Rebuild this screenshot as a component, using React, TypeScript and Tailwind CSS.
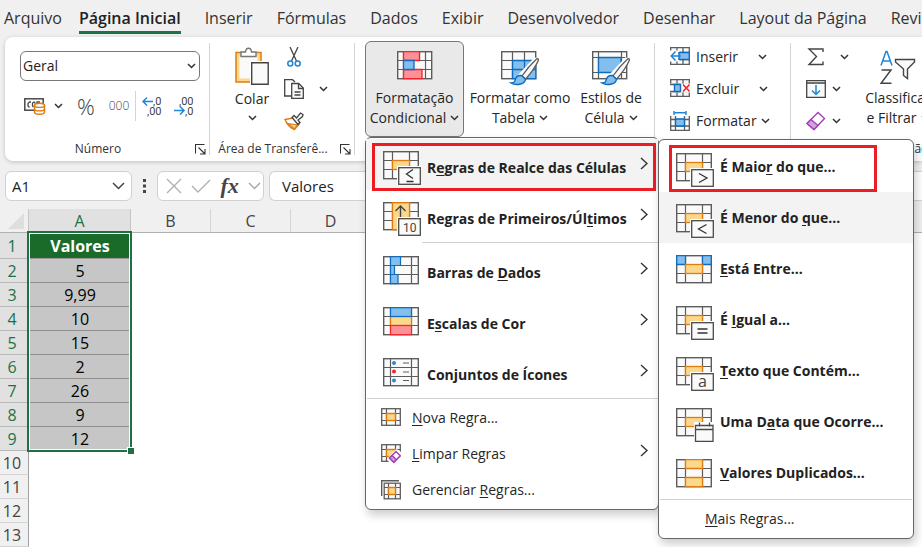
import React, { useState } from 'react';
import clsx from 'clsx';

const GRAY = '#5c5c5c';
const ORANGE = '#e07b10';
const AMBER = '#fbd88b';
const BLUE = '#0f6cbd';
const SKY = '#83beec';
const RED = '#f0262b';
const PINK = '#ff9097';

/* ---------- small glyphs ---------- */

const ChevronDown: React.FC<{ className?: string }> = ({ className }) => (
  <svg width="9" height="6" viewBox="0 0 9 6" fill="none" className={clsx('shrink-0', className)}>
    <path d="M1 1l3.5 3.5L8 1" stroke="#333" strokeWidth="1.5" />
  </svg>
);

const WideChevron: React.FC<{ color: string }> = ({ color }) => (
  <svg width="13" height="8" viewBox="0 0 13 8" fill="none" className="shrink-0">
    <path d="M1 1l5.5 5.5L12 1" stroke={color} strokeWidth="1.5" />
  </svg>
);

const ChevronRight = () => (
  <svg width="8" height="13" viewBox="0 0 8 13" fill="none" className="mb-2 shrink-0">
    <path d="M1 1l6 5.5L1 12" stroke="#333" strokeWidth="1.4" />
  </svg>
);

const Launcher = () => (
  <svg width="11" height="11" viewBox="0 0 11 11" fill="none" stroke="#333" strokeWidth="1.1">
    <path d="M.5 9.5V.5h9M3.5 3.5l6 6M10 5v5H5" />
  </svg>
);

/* ---------- menu icons, 38x34 ---------- */

interface GridIconProps {
  cols?: [number, number];
  children?: React.ReactNode;
  over?: React.ReactNode;
}

const GridIcon: React.FC<GridIconProps> = ({ cols = [9.5, 26.5], children, over }) => (
  <svg width="38" height="34" viewBox="0 0 38 34" fill="none" className="shrink-0">
    <rect x=".7" y=".7" width="34.6" height="27" fill="#fafafa" stroke={GRAY} strokeWidth="1.4" />
    <path d={`M${cols[0]} .5v27M${cols[1]} .5v27M.5 9.5h35M.5 18.5h35`} stroke={GRAY} strokeWidth="1.2" />
    {children}
    {over}
  </svg>
);

const MidCell = () => <rect x="9.5" y="9.5" width="17" height="9" fill={AMBER} stroke={ORANGE} strokeWidth="1.3" />;

const Badge: React.FC<{ children: React.ReactNode }> = ({ children }) => (
  <g>
    <path d="M14 15h24v19H14z" fill="#fff" />
    <rect x="15.7" y="16.7" width="21.6" height="16.6" fill="#fafafa" stroke="#4a4a4a" strokeWidth="1.3" />
    {children}
  </g>
);

const BadgeIcon: React.FC<{ d: string }> = ({ d }) => (
  <GridIcon over={<Badge><path d={d} stroke="#333" strokeWidth="1.3" /></Badge>}>
    <MidCell />
  </GridIcon>
);

const TopTenIcon = () => (
  <GridIcon
    over={
      <Badge>
        <text x="20" y="30" fontSize="12" fontWeight="400" fill="#444" fontFamily="Roboto, sans-serif">10</text>
      </Badge>
    }
  >
    <rect x="9.5" y=".7" width="17" height="27" fill={AMBER} stroke={ORANGE} strokeWidth="1.3" />
    <path d="M17.5 15V4M12.5 9l5-5 5 5" stroke="#444" strokeWidth="1.4" />
  </GridIcon>
);

const DataBarsIcon = () => (
  <GridIcon cols={[7.5, 28.5]}>
    <path d="M7.5.7h10v8.8h-10zM7.5 9.5h4v9h-4zM7.5 18.5h7.5v9.2h-7.5z" fill={SKY} stroke={BLUE} strokeWidth="1.2" />
  </GridIcon>
);

const ColorScalesIcon = () => (
  <GridIcon cols={[7.5, 28.5]}>
    <rect x="7.5" y="9.5" width="21" height="9" fill={AMBER} stroke={ORANGE} strokeWidth="1.2" />
    <rect x="7.5" y=".7" width="21" height="8.8" fill={SKY} stroke={BLUE} strokeWidth="1.2" />
    <rect x="7.5" y="18.5" width="21" height="9.2" fill={PINK} stroke={RED} strokeWidth="1.2" />
  </GridIcon>
);

const IconSetsIcon = () => (
  <GridIcon cols={[7.5, 28.5]}>
    <circle cx="11" cy="5" r="2" fill="#2b88d8" />
    <circle cx="11" cy="13.5" r="2" fill={RED} />
    <circle cx="11" cy="22.5" r="2" fill="#2b88d8" />
    <path d="M20 5h6M20 14h6M20 22.5h6" stroke={GRAY} strokeWidth="1.2" />
  </GridIcon>
);

const BetweenIcon = () => (
  <GridIcon>
    <path d="M.7.7h8.8v8.8H.7zM26.5.7h8.8v8.8h-8.8z" fill={SKY} stroke={BLUE} strokeWidth="1.3" />
    <MidCell />
  </GridIcon>
);

const ContainsIcon = () => (
  <GridIcon
    over={
      <Badge>
        <text x="22" y="30" fontSize="16" fontWeight="400" fill="#444" fontFamily="Open Sans, sans-serif">a</text>
      </Badge>
    }
  >
    <MidCell />
  </GridIcon>
);

const DateIcon = () => (
  <GridIcon
    over={
      <g>
        <path d="M18 14h20v20H18z" fill="#fff" />
        <path d="M19.5 17.5H37v15.8H19.5zM19.5 21.5H37M23.5 14.5v4M33.5 14.5v4" fill="#fafafa" stroke="#4a4a4a" strokeWidth="1.3" />
      </g>
    }
  >
    <MidCell />
  </GridIcon>
);

const DuplicatesIcon = () => (
  <GridIcon>
    <path d="M9.5.7h17v8.8h-17zM9.5 18.5h17v9.2h-17z" fill={AMBER} stroke={ORANGE} strokeWidth="1.3" />
  </GridIcon>
);

/* ---------- small menu icons, 20x20 ---------- */

const SmallGrid = () => (
  <>
    <rect x=".7" y=".7" width="18.6" height="16.6" fill="#fafafa" stroke={GRAY} strokeWidth="1.3" />
    <path d="M5.5 1v16M14.5 1v16M1 5.5h18M1 12.5h18" stroke={GRAY} strokeWidth="1.2" />
    <rect x="5.5" y="5.5" width="9" height="7" fill={AMBER} stroke={ORANGE} strokeWidth="1.4" />
  </>
);

const NewRuleIcon = () => (
  <svg width="20" height="20" viewBox="0 0 20 20" fill="none" className="shrink-0">
    <SmallGrid />
  </svg>
);

const ClearRulesIcon = () => (
  <svg width="20" height="20" viewBox="0 0 20 20" fill="none" className="shrink-0">
    <SmallGrid />
    <path d="M6 14.500L15.500 5 20 8v12H9z" fill="#fff" />
    <path d="M8.5 14l6.500-6.500 4.300 4.300-6.500 6.500z" fill="#fff" stroke="#a33fb5" strokeWidth="1.5" />
    <path d="M8.5 14l2.600-2.600 4.300 4.300-2.600 2.600z" fill="#d3a0dc" stroke="#a33fb5" strokeWidth="1.4" />
  </svg>
);

const ManageRulesIcon = () => (
  <svg width="20" height="20" viewBox="0 0 20 20" fill="none" className="shrink-0">
    <path d="M.7 16V.7H18" stroke={GRAY} strokeWidth="1.4" />
    <rect x="3.2" y="3.2" width="16.1" height="15.6" fill="#fafafa" stroke={GRAY} strokeWidth="1.3" />
    <path d="M7.5 3v16M14.5 3v16M3 7.5h16M3 14.5h16" stroke={GRAY} strokeWidth="1.2" />
    <rect x="7.5" y="7.5" width="7" height="7" fill={AMBER} stroke={ORANGE} strokeWidth="1.4" />
  </svg>
);

/* ---------- ribbon icons ---------- */

const CurrencyIcon = () => (
  <svg width="22" height="18" viewBox="0 0 22 18" fill="none" className="shrink-0">
    <rect x=".8" y="1.8" width="18.4" height="11.4" stroke="#4a4a4a" strokeWidth="1.5" />
    <path d="M7 5H5.5L4 6.500V9l1.500 1.500M11.500 6.500L10 5 8.500 6v3l1 1.200M13 7V5h3" stroke="#4a4a4a" strokeWidth="1.3" />
    <path d="M10.5 8.5c0-3 10-3 10 0V15c0 3-10 3-10 0z" fill="#fff" stroke={ORANGE} strokeWidth="1.5" />
    <path d="M10.500 8.500c0 2.500 10 2.500 10 0M10.500 12c0 2.500 10 2.500 10 0" stroke={ORANGE} strokeWidth="1.4" />
  </svg>
);

const decimalText = { fontSize: 11, fill: '#444', fontFamily: 'Roboto, sans-serif' };

const IncreaseDecimalIcon = () => (
  <svg width="22" height="22" viewBox="0 0 22 22" fill="none">
    <text x="11" y="10" {...decimalText}>,0</text>
    <text x="5" y="20" {...decimalText}>,00</text>
    <path d="M11 6.500H1M5 2.500l-4 4 4 4" stroke="#1f87d6" strokeWidth="1.5" />
  </svg>
);

const DecreaseDecimalIcon = () => (
  <svg width="22" height="22" viewBox="0 0 22 22" fill="none">
    <text x="5" y="10" {...decimalText}>,00</text>
    <text x="11" y="20" {...decimalText}>,0</text>
    <path d="M0 15.500h10M6 11.500l4 4-4 4" stroke="#1f87d6" strokeWidth="1.5" />
  </svg>
);

const PasteIcon = () => (
  <svg width="34" height="38" viewBox="0 0 34 38" fill="none">
    <path d="M1 5.500h25V35H1z" fill={AMBER} stroke={ORANGE} strokeWidth="1.5" />
    <path d="M4.500 9h18v22.500h-18z" fill="#fafafa" />
    <path d="M6 9.500V5h4.500c.5-5 5.500-5 6 0H21v4.500z" fill="#fff" stroke="#777" strokeWidth="1.4" />
    <path d="M15 14h19v24H15z" fill="#fff" />
    <path d="M16.700 15.700h16.500v21.500H16.700z" fill="#fafafa" stroke="#444" strokeWidth="1.4" />
  </svg>
);

const CutIcon = () => (
  <svg width="20" height="20" viewBox="0 0 20 20" fill="none">
    <path d="M6 0l6.500 14M14 0L7.500 14" stroke="#444" strokeWidth="1.3" />
    <circle cx="6.300" cy="16.500" r="2.500" stroke="#1f87d6" strokeWidth="1.5" />
    <circle cx="13.700" cy="16.500" r="2.500" stroke="#1f87d6" strokeWidth="1.5" />
  </svg>
);

const CopyIcon = () => (
  <svg width="20" height="20" viewBox="0 0 20 20" fill="none" stroke="#444" strokeWidth="1.3">
    <path d="M7 17H.7V.7h7.800L11 3" />
    <path d="M7.700 4.500h7l4.600 4.500v10.300H7.700z" fill="#fafafa" />
    <path d="M14.500 5v4.500H19M10.500 13h6M10.500 16h6" />
  </svg>
);

const PainterIcon = () => (
  <svg width="20" height="20" viewBox="0 0 20 20" fill="none">
    <path d="M1 8.500l8-1.500 6 6-4.500 5.500C6 17 3 13 1 8.500z" fill="#fff" stroke={ORANGE} strokeWidth="1.5" />
    <path d="M4 12.500l9 1.500-2.500 4z" fill={AMBER} stroke={ORANGE} strokeWidth="1.2" />
    <path d="M8 6.500l2-2 2.500 2.500 4-5 2.500 1.500-.5 2-4.500 3.500 2 2.500-2 2z" fill="#fafafa" stroke="#444" strokeWidth="1.3" />
  </svg>
);

const ConditionalIcon = () => (
  <svg width="38" height="36" viewBox="0 0 38 36" fill="none">
    <rect x="1.700" y="1.700" width="34" height="27" fill="#fafafa" stroke={GRAY} strokeWidth="1.4" />
    <path d="M7.500 1v28M23.500 1v28M29.500 1v28M1 10.500h35M1 19.500h35" stroke={GRAY} strokeWidth="1.2" />
    <path d="M18.500 11h10v8h-10z" fill="#fafafa" />
    <path d="M7.500 1.700h16v8.800h-16zM7.500 19.500H26v9.200H7.500z" fill={PINK} stroke={RED} strokeWidth="1.3" />
    <path d="M7.500 10.500H18v9H7.500z" fill={SKY} stroke={BLUE} strokeWidth="1.3" />
  </svg>
);

const Brush = () => (
  <>
    <path d="M36 9L20 26l-4 6" stroke="#fff" strokeWidth="6" />
    <path d="M37.300 10.500c.8-1.500-.8-2.300-2-1.300C30 14 25 20 21 26l3.500 3.200C30 23 34.500 17 37.300 10.500z" fill="#fafafa" stroke={GRAY} strokeWidth="1.3" />
    <path d="M20.500 25.500c-5-.5-6 2-6.500 5-.3 1.800-2 2.500-4 2.500 4 2.500 14 2 14.500-3.800z" fill={SKY} stroke={BLUE} strokeWidth="1.4" />
  </>
);

const TableFormatIcon = () => (
  <svg width="38" height="36" viewBox="0 0 38 36" fill="none">
    <rect x=".7" y="1.700" width="34" height="27" fill="#fafafa" stroke={GRAY} strokeWidth="1.4" />
    <path d="M11.500 10.500H35v18.300H11.500z" fill={SKY} />
    <path d="M11.500 1v27.500M23.500 1v9.500M.5 10.500h11M.5 19.500h11" stroke={GRAY} strokeWidth="1.2" />
    <path d="M11.500 10.500h23.300v18.200H11.500zM11.500 19.500h23M23.500 10.500v18" stroke={BLUE} strokeWidth="1.3" />
    <Brush />
  </svg>
);

const CellStylesIcon = () => (
  <svg width="38" height="36" viewBox="0 0 38 36" fill="none">
    <rect x=".7" y="1.700" width="34" height="27" fill="#fafafa" stroke={GRAY} strokeWidth="1.4" />
    <path d="M6.500 1v27.500M29.500 1v27.500M.5 7.500h34M.5 22.500h34" stroke={GRAY} strokeWidth="1.2" />
    <path d="M6.500 7.500H29v15H6.500z" fill={SKY} stroke={BLUE} strokeWidth="1.3" />
    <Brush />
  </svg>
);

const CellBase = () => (
  <path d="M.7.7h18.600v16.600H.7zM7 1v16M13 1v16M1 5.500h18M1 12.500h18" fill="#fafafa" stroke={GRAY} strokeWidth="1.3" />
);

const InsertCellsIcon = () => (
  <svg width="20" height="20" viewBox="0 0 20 20" fill="none" className="shrink-0">
    <CellBase />
    <path d="M0 3.500h10v11H0z" fill="#fff" />
    <path d="M9 5.500h10.300v7H9z" fill={SKY} stroke={BLUE} strokeWidth="1.4" />
    <path d="M11 9H1.500M5.500 4.500L1.200 9l4.300 4.500" stroke="#1f87d6" strokeWidth="1.5" />
  </svg>
);

const DeleteCellsIcon = () => (
  <svg width="20" height="20" viewBox="0 0 20 20" fill="none" className="shrink-0">
    <CellBase />
    <path d="M0 4.500h20v9H0z" fill="#fff" />
    <path d="M0 5.500h10M0 12.500h10" stroke={GRAY} strokeWidth="1.3" />
    <path d="M4.500 5.500h6v7h-6z" fill={SKY} stroke={BLUE} strokeWidth="1.4" />
    <path d="M13 5.500l6.500 7M19.500 5.500l-6.500 7" stroke={RED} strokeWidth="1.6" />
  </svg>
);

const FormatCellsIcon = () => (
  <svg width="20" height="20" viewBox="0 0 20 20" fill="none" className="shrink-0">
    <path d="M.7 5v14.300h18.600V5M5.500 5v14M14.500 5v14M1 8.500h18M1 15h18" stroke={GRAY} strokeWidth="1.3" />
    <path d="M5.500 8h9v7h-9z" fill={SKY} stroke={BLUE} strokeWidth="1.4" />
    <path d="M4 1.800h12M4 0v4M16 0v4" stroke="#1f87d6" strokeWidth="1.4" />
  </svg>
);

const SumIcon = () => (
  <svg width="20" height="20" viewBox="0 0 20 20" fill="none" className="shrink-0">
    <path d="M17 5V2H3l7.500 7.500L3 17.500h14v-3" stroke="#444" strokeWidth="1.4" />
  </svg>
);

const FillIcon = () => (
  <svg width="20" height="20" viewBox="0 0 20 20" fill="none" className="shrink-0">
    <path d="M.7 1.700h18.600v16.600H.7zM.7 4h18.600" fill="#fafafa" stroke="#444" strokeWidth="1.3" />
    <path d="M10 6v9M6 11.500l4 4 4-4" stroke="#1f87d6" strokeWidth="1.5" />
  </svg>
);

const EraserIcon = () => (
  <svg width="20" height="20" viewBox="0 0 20 20" fill="none" className="shrink-0">
    <path d="M1 12.500L12 1.500l6.500 6L8 18.500z" fill="#fff" stroke="#a33fb5" strokeWidth="1.4" />
    <path d="M1 12.500L5 8.500l7 6L8 18.500z" fill="#d3a0dc" stroke="#a33fb5" strokeWidth="1.3" />
  </svg>
);

const SortFilterIcon = () => (
  <svg width="36" height="36" viewBox="0 0 36 36" fill="none">
    <path d="M1 15.500L6 1.500h1l5 14M3 11h7" stroke="#1f87d6" strokeWidth="1.5" />
    <path d="M1.500 20H11L1 33.300h10.500" stroke="#444" strokeWidth="1.5" />
    <path d="M15.500 9.500h19V12L27.500 19v9.500l-4-3V19l-8-7z" fill="#fafafa" stroke="#444" strokeWidth="1.4" />
  </svg>
);

/* ---------- menus ---------- */

interface MenuEntry {
  label: string;
  icon?: React.ReactNode;
  sub?: boolean;
  active?: boolean;
  mark?: string;
}

const mainRules: MenuEntry[] = [
  { label: 'R&egras de Realce das Células', icon: <BadgeIcon d="M30 18.500l-6.500 4.500 6.500 4.500M23.500 30.500h7" />, sub: true, active: true, mark: 'left-1.5 right-0.5 top-1 -bottom-px' },
  { label: 'Regras de Primeiros/Úl&timos', icon: <TopTenIcon />, sub: true },
];

const visualRules: MenuEntry[] = [
  { label: 'Barras de &Dados', icon: <DataBarsIcon />, sub: true },
  { label: 'E&scalas de Cor', icon: <ColorScalesIcon />, sub: true },
  { label: 'Con&juntos de Ícones', icon: <IconSetsIcon />, sub: true },
];

const ruleActions: MenuEntry[] = [
  { label: '&Nova Regra...', icon: <NewRuleIcon /> },
  { label: '&Limpar Regras', icon: <ClearRulesIcon />, sub: true },
  { label: 'Gerenciar &Regras...', icon: <ManageRulesIcon /> },
];

const highlightRules: MenuEntry[] = [
  { label: 'É Maio&r do que...', icon: <BadgeIcon d="M23 20.500l8 4.500-8 4.500" />, mark: 'left-2.5 w-[208px] top-1 bottom-0' },
  { label: 'É Menor do &que...', icon: <BadgeIcon d="M30.500 20.500l-8 4.500 8 4.500" />, active: true },
  { label: '&Está Entre...', icon: <BetweenIcon /> },
  { label: 'É &Igual a...', icon: <BadgeIcon d="M21.500 23h10M21.500 27h10" /> },
  { label: '&Texto que Contém...', icon: <ContainsIcon /> },
  { label: 'Uma D&ata que Ocorre...', icon: <DateIcon /> },
  { label: '&Valores Duplicados...', icon: <DuplicatesIcon /> },
];

// "&" marks the access key
const AccessLabel: React.FC<{ text: string }> = ({ text }) => {
  const [before, rest] = text.split('&');
  return (
    <span className="whitespace-nowrap">
      {before}
      <span className="underline underline-offset-2">{rest[0]}</span>
      {rest.slice(1)}
    </span>
  );
};

const LargeItem: React.FC<{ entry: MenuEntry }> = ({ entry }) => (
  <button
    role="menuitem"
    className={clsx(
      'relative flex h-[51px] w-full items-center gap-1.5 pt-1.5 pl-[17px] pr-2.5 text-left text-sm font-bold text-[#222]',
      entry.active ? 'bg-[#f3f3f3]' : 'hover:bg-[#f3f3f3]'
    )}
  >
    {entry.icon}
    <span className={clsx('flex-1', !entry.sub && 'pb-1.5')}><AccessLabel text={entry.label} /></span>
    {entry.sub && <ChevronRight />}
    {entry.mark && <span className={clsx('absolute border-3 border-[#ec1c24]', entry.mark)} />}
  </button>
);

const SmallItem: React.FC<{ entry: MenuEntry }> = ({ entry }) => (
  <button role="menuitem" className="flex h-9 w-full items-center pl-[15px] pr-2.5 text-left text-sm text-[#262626] hover:bg-[#f3f3f3]">
    <span className="w-[31px] shrink-0">{entry.icon}</span>
    <span className="flex-1"><AccessLabel text={entry.label} /></span>
    {entry.sub && <ChevronRight />}
  </button>
);

const menuBox = 'absolute rounded-md border border-[#666] bg-white py-px shadow-[2px_5px_10px_rgba(0,0,0,0.2)]';

const ConditionalMenu = () => (
  <div role="menu" className={clsx(menuBox, 'left-0 top-full z-40 w-[294px]')}>
    {mainRules.map(e => <LargeItem key={e.label} entry={e} />)}
    <div className="my-px ml-14 h-px bg-[#d0d0d0]" />
    {visualRules.map(e => <LargeItem key={e.label} entry={e} />)}
    <div className="my-px ml-px h-px bg-[#d0d0d0]" />
    {ruleActions.map(e => <SmallItem key={e.label} entry={e} />)}

    <div role="menu" className={clsx(menuBox, 'left-full top-px z-50 w-[256px]')}>
      {highlightRules.map(e => <LargeItem key={e.label} entry={e} />)}
      <div className="mx-px my-px h-px bg-[#d0d0d0]" />
      <SmallItem entry={{ label: '&Mais Regras...' }} />
    </div>
  </div>
);

/* ---------- ribbon ---------- */

const tabs = ['Arquivo', 'Página Inicial', 'Inserir', 'Fórmulas', 'Dados', 'Exibir', 'Desenvolvedor', 'Desenhar', 'Layout da Página', 'Revisão'];

const Group: React.FC<{ label?: string; launcher?: boolean; className: string; children: React.ReactNode }> = ({ label, launcher, className, children }) => (
  <section className={clsx('relative flex shrink-0 flex-col pt-1', className)}>
    <div className="flex h-24 items-start">{children}</div>
    <div className="flex h-6 items-center pr-1 text-xs text-[#333]">
      <span className="mr-1 flex-1 text-center whitespace-nowrap">{label}</span>
      {launcher && <button aria-label={`Opções de ${label}`}><Launcher /></button>}
    </div>
    <span className="absolute top-1.5 right-0 h-28 w-px bg-[#d4d4d4]" />
  </section>
);

const BigButton: React.FC<{ icon: React.ReactNode; lines: [string, string]; className?: string }> = ({ icon, lines, className }) => (
  <button className={clsx('flex h-24 shrink-0 flex-col items-center rounded-md border pt-2 text-sm leading-5 text-[#262626]', className)}>
    <span className="h-[38px]">{icon}</span>
    <span className="whitespace-nowrap">{lines[0]}</span>
    <span className="flex items-center gap-1 whitespace-nowrap">{lines[1]}<ChevronDown /></span>
  </button>
);

const SmallButton: React.FC<{ icon: React.ReactNode; label: string; text?: boolean; gap?: string }> = ({ icon, label, text, gap }) => (
  <button aria-label={label} className="flex h-8 items-center text-sm text-[#262626]">
    {icon}
    {text && <span className="ml-1.5">{label}</span>}
    <ChevronDown className={gap} />
  </button>
);

const Ribbon = () => (
  <div className="ml-[5px] flex h-[124px] shrink-0 rounded-l-lg bg-white shadow-[0_1px_4px_rgba(0,0,0,0.2)]">
    <Group label="Número" launcher className="w-[205px]">
      <div className="w-full pt-2.5 pl-[15px] pr-2.5">
        <div className="relative">
          <select aria-label="Formato de Número" className="h-[30px] w-full appearance-none rounded-md border border-[#777] bg-white px-0.5 text-sm text-[#222]">
            <option>Geral</option>
          </select>
          <ChevronDown className="pointer-events-none absolute top-3 right-1" />
        </div>
        <div className="mt-2.5 flex h-[30px] items-center text-[#444]">
          <button aria-label="Formato de Contabilização" className="flex items-center gap-2 pl-1"><CurrencyIcon /><ChevronDown /></button>
          <button className="ml-3.5 text-[22px] font-light">%</button>
          <button className="ml-3.5 text-xs font-light">000</button>
          <span className="ml-1.5 h-full w-px bg-[#d4d4d4]" />
          <button aria-label="Aumentar Casas Decimais" className="ml-1.5"><IncreaseDecimalIcon /></button>
          <button aria-label="Diminuir Casas Decimais" className="ml-2.5"><DecreaseDecimalIcon /></button>
        </div>
      </div>
    </Group>

    <Group label="Área de Transferê..." launcher className="w-[145px]">
      <button className="ml-6 flex w-9 flex-col items-center pt-1.5 text-sm leading-5 text-[#262626]">
        <PasteIcon />
        <span className="mt-1">Colar</span>
        <ChevronDown className="mt-1.5" />
      </button>
      <div className="ml-3.5 flex flex-col">
        <button aria-label="Recortar" className="flex h-8 items-center"><CutIcon /></button>
        <button aria-label="Copiar" className="flex h-8 items-center gap-[15px]"><CopyIcon /><ChevronDown /></button>
        <button aria-label="Pincel de Formatação" className="flex h-8 items-center"><PainterIcon /></button>
      </div>
    </Group>

    <Group className="w-[300px] pl-2.5">
      <div className="relative shrink-0">
        <BigButton icon={<ConditionalIcon />} lines={['Formatação', 'Condicional']} className="w-[99px] border-[#777] bg-[#e9e9e9]" />
        <ConditionalMenu />
      </div>
      <BigButton icon={<TableFormatIcon />} lines={['Formatar como', 'Tabela']} className="w-[112px] border-transparent" />
      <BigButton icon={<CellStylesIcon />} lines={['Estilos de', 'Célula']} className="w-[70px] border-transparent" />
    </Group>

    <Group className="w-[136px] pl-[15px]">
      <div className="flex flex-col">
        <SmallButton icon={<InsertCellsIcon />} label="Inserir" text gap="ml-5" />
        <SmallButton icon={<DeleteCellsIcon />} label="Excluir" text gap="ml-5" />
        <SmallButton icon={<FormatCellsIcon />} label="Formatar" text gap="ml-1" />
      </div>
    </Group>

    <Group label="Edição" className="w-[246px]">
      <div className="ml-[15px] flex w-14 flex-col">
        <SmallButton icon={<SumIcon />} label="AutoSoma" gap="ml-3.5" />
        <SmallButton icon={<FillIcon />} label="Preencher" gap="ml-1.5" />
        <SmallButton icon={<EraserIcon />} label="Limpar" gap="ml-1.5" />
      </div>
      <BigButton icon={<SortFilterIcon />} lines={['Classificar', 'e Filtrar']} className="w-[72px] border-transparent" />
    </Group>
  </div>
);

/* ---------- sheet ---------- */

const columns = ['A', 'B', 'C', 'D', 'E', 'F', 'G', 'H', 'I', 'J', 'K'];
const values = ['Valores', '5', '9,99', '10', '15', '2', '26', '9', '12'];

const Sheet = () => (
  <div className="relative min-h-0 flex-1 overflow-hidden bg-white">
    <table className="w-full table-fixed border-separate border-spacing-0 text-base">
      <thead>
        <tr className="h-6 bg-[#f0f0f0] text-[#444]">
          <th className="w-[29px] border-r border-b border-r-[#c6c6c6] border-b-[#b0b0b0] p-0">
            <svg width="16" height="16" viewBox="0 0 16 16" className="ml-2"><path d="M16 0v16H0z" fill="#dedede" /></svg>
          </th>
          {columns.map((c, i) => (
            <th
              key={c}
              className={clsx(
                'border-r border-b p-0 font-normal leading-5',
                i === 0 ? 'w-[102px] border-r-[#c6c6c6] border-b-[#1e7145] bg-[#e1e1e1] text-[#1e7145]' : 'w-20 border-r-[#d4d4d4] border-b-[#b0b0b0]'
              )}
            >
              {c}
            </th>
          ))}
          <th className="border-b border-[#b0b0b0] p-0" />
        </tr>
      </thead>
      <tbody>
        {Array.from({ length: 13 }, (_, r) => (
          <tr key={r} className={r === 0 ? 'h-[26px]' : 'h-6'}>
            <th
              className={clsx(
                'border-r border-b p-0 pr-1 font-normal leading-5',
                r < values.length ? 'border-[#b8b8b8] bg-[#e1e1e1] text-[#1e7145]' : 'border-r-[#a0a0a0] border-b-[#d4d4d4] bg-[#f0f0f0] text-[#444]'
              )}
            >
              {r + 1}
            </th>
            <td
              className={clsx(
                'p-0 text-center leading-5',
                r === 0 && 'border-b border-[#999] bg-[#1a6b29] font-bold text-white',
                r > 0 && r < values.length && 'border-b border-[#8f8f8f] bg-[#c6c6c6] text-black'
              )}
            >
              {values[r]}
            </td>
            <td colSpan={columns.length} className="p-0" />
          </tr>
        ))}
      </tbody>
    </table>
    {/* selection frame A1:A9 */}
    <div className="pointer-events-none absolute top-[22px] left-[27px] h-[221px] w-[105px] border-2 border-[#1e7145]">
      <div className="h-full border border-white" />
      <span className="absolute -right-1 -bottom-1 size-[7px] border-t border-l border-white bg-[#1e7145]" />
    </div>
  </div>
);

export default function App() {
  const [activeTab, setActiveTab] = useState('Página Inicial');
  const box = 'flex h-[30px] items-center rounded-md border border-[#d0d0d0] bg-white';

  return (
    <div className="flex h-screen flex-col overflow-hidden bg-[#f0f0f0] font-['Open_Sans','Noto_Sans',sans-serif]">
      <nav className="flex h-[37px] shrink-0 items-start gap-6 pl-1 text-base text-[#333]">
        {tabs.map((tab, i) => (
          <button
            key={tab}
            onClick={() => setActiveTab(tab)}
            className={clsx(
              'h-[34px] shrink-0 border-b-3 pt-1 whitespace-nowrap',
              i === 0 && '-mr-[7px]',
              activeTab === tab ? 'border-[#1e7145] font-semibold text-[#222]' : 'border-transparent'
            )}
          >
            {tab}
          </button>
        ))}
      </nav>

      <Ribbon />

      {/* Formula bar */}
      <div className="mt-2.5 mb-2 flex shrink-0 items-center pl-[5px] text-[15px] text-[#222]">
        <div className={clsx(box, 'w-[127px] pr-1.5')}>
          <input aria-label="Caixa de Nome" defaultValue="A1" className="w-full min-w-0 pl-1.5 outline-none" />
          <WideChevron color="#444" />
        </div>
        <svg width="25" height="14" viewBox="0 0 25 14" fill="#444">
          <path d="M11 0h3v3h-3zM11 5.500h3v3h-3zM11 11h3v3h-3z" />
        </svg>
        <div className={clsx(box, 'w-[107px] justify-between pl-2 pr-0.5')}>
          <button aria-label="Cancelar">
            <svg width="16" height="16" viewBox="0 0 16 16" fill="none"><path d="M1 1l14 14M15 1L1 15" stroke="#b0b0b0" strokeWidth="1.4" /></svg>
          </button>
          <button aria-label="Inserir">
            <svg width="20" height="14" viewBox="0 0 20 14" fill="none"><path d="M1 7l6 6L19 1" stroke="#b0b0b0" strokeWidth="1.4" /></svg>
          </button>
          <button className="font-['Liberation_Serif',serif] text-[22px] font-bold italic leading-6 text-[#444]">fx</button>
          <WideChevron color="#aaa" />
        </div>
        <div className={clsx(box, 'ml-[5px] flex-1 rounded-r-none border-r-0')}>
          <input aria-label="Barra de Fórmulas" defaultValue="Valores" className="w-full pl-3 outline-none" />
        </div>
      </div>

      <Sheet />
    </div>
  );
}
